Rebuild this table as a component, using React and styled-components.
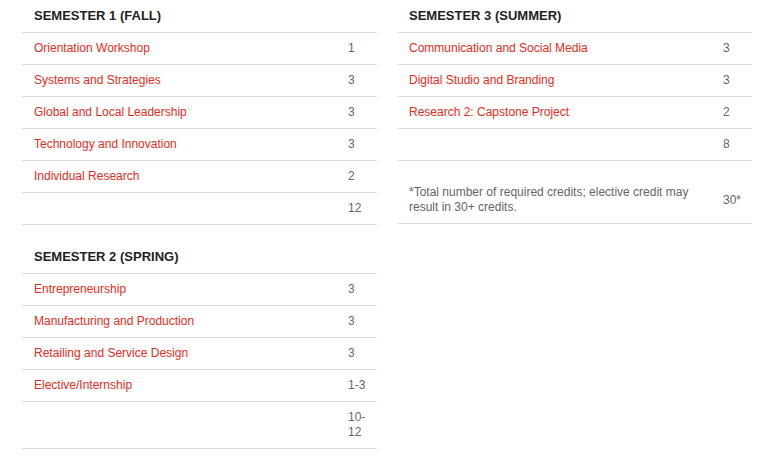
import React from 'react';
import styled, { createGlobalStyle } from 'styled-components';

const GlobalStyle = createGlobalStyle`
	body {
		margin: 0;
		background: #fff;
		font-family: Arial, "Liberation Sans", sans-serif;
	}
`;

const Page = styled.div`
	display: flex;
	align-items: flex-start;
	gap: 20px;
	padding: 0 22px;
`;
Page.displayName = 'Page';

const Column = styled.div`
	display: flex;
	flex-direction: column;
	gap: 16px;
	width: 355px;
`;
Column.displayName = 'Column';

const Semester = styled.section`
	display: flex;
	flex-direction: column;
`;
Semester.displayName = 'Semester';

const Heading = styled.h3`
	margin: 0;
	padding: 8px 0 8px 12px;
	font-size: 13px;
	line-height: 16px;
	font-weight: bold;
	color: #222;
	border-bottom: 1px solid #ddd;
`;
Heading.displayName = 'Heading';

const Row = styled.div`
	display: flex;
	align-items: center;
	padding: ${props => (props.note ? '24px' : '8px')} 0 8px 12px;
	border-bottom: 1px solid #ddd;
	font-size: 12px;
	line-height: 15px;
`;
Row.displayName = 'Row';

const Course = styled.a`
	flex: 1;
	color: #e62b22;
	text-decoration: none;
	cursor: pointer;
`;
Course.displayName = 'Course';

const Note = styled.span`
	flex: 1;
	color: #666;
	padding-right: 20px;
`;
Note.displayName = 'Note';

const Credits = styled.span`
	width: 22px;
	padding-right: 7px;
	color: #666;
`;
Credits.displayName = 'Credits';

const semesters = {
	left: [
		{
			title: 'SEMESTER 1 (FALL)',
			courses: [
				['Orientation Workshop', '1'],
				['Systems and Strategies', '3'],
				['Global and Local Leadership', '3'],
				['Technology and Innovation', '3'],
				['Individual Research', '2']
			],
			total: '12'
		},
		{
			title: 'SEMESTER 2 (SPRING)',
			courses: [
				['Entrepreneurship', '3'],
				['Manufacturing and Production', '3'],
				['Retailing and Service Design', '3'],
				['Elective/Internship', '1-3']
			],
			total: '10-12'
		}
	],
	right: [
		{
			title: 'SEMESTER 3 (SUMMER)',
			courses: [
				['Communication and Social Media', '3'],
				['Digital Studio and Branding', '3'],
				['Research 2: Capstone Project', '2']
			],
			total: '8',
			note: '*Total number of required credits; elective credit may result in 30+ credits.',
			noteCredits: '30*'
		}
	]
};

const SemesterTable = ({ semester }) => (
	<Semester>
		<Heading>{semester.title}</Heading>
		{semester.courses.map(([name, credits]) => (
			<Row key={name}>
				<Course>{name}</Course>
				<Credits>{credits}</Credits>
			</Row>
		))}
		<Row>
			<Note />
			<Credits>{semester.total}</Credits>
		</Row>
		{semester.note && (
			<Row note>
				<Note>{semester.note}</Note>
				<Credits>{semester.noteCredits}</Credits>
			</Row>
		)}
	</Semester>
);

const App = () => (
	<>
		<GlobalStyle />
		<Page>
			<Column>
				{semesters.left.map(s => (
					<SemesterTable key={s.title} semester={s} />
				))}
			</Column>
			<Column>
				{semesters.right.map(s => (
					<SemesterTable key={s.title} semester={s} />
				))}
			</Column>
		</Page>
	</>
);

export default App;
